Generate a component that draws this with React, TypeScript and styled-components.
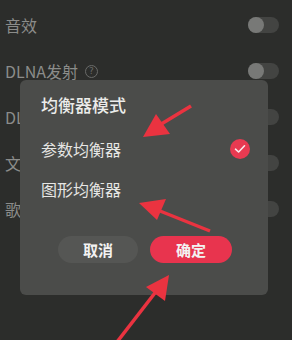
import React, { FC } from 'react';
import styled, { createGlobalStyle } from 'styled-components';

const GlobalStyle = createGlobalStyle`
  html, body {
    margin: 0;
    padding: 0;
    background: #2c2d2b;
  }
  body {
    font-family: 'Noto Sans CJK SC', 'Noto Sans', sans-serif;
  }
`;

const Screen = styled.div`
  position: relative;
  width: 292px;
  height: 340px;
  overflow: hidden;
  background: #2c2d2b;
`;

const SettingList = styled.div`
  display: flex;
  flex-direction: column;
  padding-top: 2px;
`;

const SettingRow = styled.div`
  height: 46px;
  display: flex;
  align-items: center;
  justify-content: space-between;
  padding: 0 13px 0 5px;
`;

const SettingLabel = styled.div`
  display: flex;
  align-items: center;
  gap: 7px;
  font-size: 16px;
  color: #8b8c8a;
  line-height: 1;
`;

const HelpIcon = styled.span`
  width: 11px;
  height: 11px;
  border: 1px solid #6a6b69;
  border-radius: 50%;
  font-size: 9px;
  color: #6a6b69;
  display: flex;
  align-items: center;
  justify-content: center;
  font-family: 'DejaVu Sans', sans-serif;
`;

const Toggle = styled.div`
  width: 31px;
  height: 16px;
  border-radius: 8px;
  background: #434442;
  display: flex;
  align-items: center;
`;

const ToggleKnob = styled.div`
  width: 16px;
  height: 16px;
  border-radius: 50%;
  background: #787977;
`;

const Dialog = styled.div`
  position: absolute;
  left: 20px;
  top: 80px;
  width: 248px;
  height: 215px;
  border-radius: 6px;
  background: #4b4c4a;
  display: flex;
  flex-direction: column;
  box-sizing: border-box;
  padding: 14px 0 0 21px;
`;

const DialogTitle = styled.div`
  font-size: 17px;
  font-weight: 500;
  color: #ececea;
  height: 22px;
  line-height: 22px;
`;

const OptionList = styled.div`
  display: flex;
  flex-direction: column;
  margin-top: 13px;
`;

const Option = styled.div`
  height: 40px;
  display: flex;
  align-items: center;
  justify-content: space-between;
  padding-right: 18px;
  font-size: 16px;
  color: #e6e6e4;
`;

const CheckMark = styled.div`
  width: 20px;
  height: 20px;
  border-radius: 50%;
  background: #e83a51;
  display: flex;
  align-items: center;
  justify-content: center;
`;

const ButtonRow = styled.div`
  display: flex;
  gap: 12px;
  margin-top: 27px;
  margin-left: 17px;
`;

const Button = styled.div<{ primary?: boolean; w: number }>`
  width: ${({ w }) => w}px;
  height: 27px;
  border-radius: 14px;
  background: ${({ primary }) => (primary ? '#e8344e' : '#555654')};
  color: #f2f2f2;
  font-size: 15px;
  font-weight: 700;
  display: flex;
  align-items: center;
  justify-content: center;
`;

const ArrowLayer = styled.svg`
  position: absolute;
  left: 0;
  top: 0;
  pointer-events: none;
`;

const rows = [
  { label: '音效' },
  { label: 'DLNA发射', help: true },
  { label: 'DLNA接收' },
  { label: '文件' },
  { label: '歌词' },
];

const App: FC = () => {
  return (
    <>
      <GlobalStyle />
      <Screen>
        <SettingList>
          {rows.map((r) => (
            <SettingRow key={r.label}>
              <SettingLabel>
                {r.label}
                {r.help && <HelpIcon>?</HelpIcon>}
              </SettingLabel>
              <Toggle>
                <ToggleKnob />
              </Toggle>
            </SettingRow>
          ))}
        </SettingList>

        <Dialog>
          <DialogTitle>均衡器模式</DialogTitle>
          <OptionList>
            <Option>
              参数均衡器
              <CheckMark>
                <svg width="12" height="10" viewBox="0 0 12 10">
                  <path
                    d="M1.5 5.2 L4.6 8 L10.5 1.8"
                    fill="none"
                    stroke="#fbe9ec"
                    strokeWidth="1.6"
                    strokeLinecap="round"
                    strokeLinejoin="round"
                  />
                </svg>
              </CheckMark>
            </Option>
            <Option>图形均衡器</Option>
          </OptionList>
          <ButtonRow>
            <Button w={80}>取消</Button>
            <Button w={82} primary>
              确定
            </Button>
          </ButtonRow>
        </Dialog>

        <ArrowLayer width="292" height="340" viewBox="0 0 292 340">
          <g fill="#ea3340" stroke="#ea3340">
            <line x1="191" y1="106" x2="158" y2="126" strokeWidth="3.5" />
            <polygon points="143,137 156,114 170,134" stroke="none" />
            <line x1="210" y1="231" x2="155" y2="209" strokeWidth="3.5" />
            <polygon points="139,203 166,199 157,220" stroke="none" />
            <line x1="117" y1="342" x2="158" y2="289" strokeWidth="3.5" />
            <polygon points="169,275 146,287 165,301" stroke="none" />
          </g>
        </ArrowLayer>
      </Screen>
    </>
  );
};

export default App;
